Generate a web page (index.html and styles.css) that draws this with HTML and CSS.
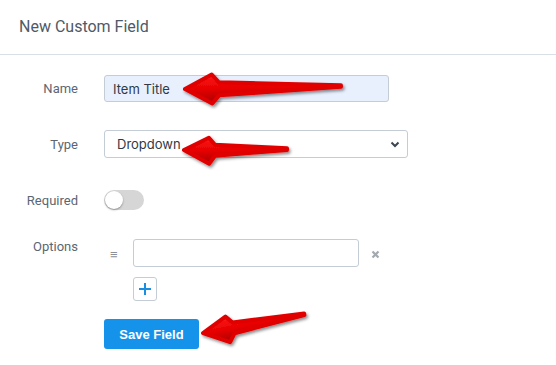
FILE: index.html
```html
<!DOCTYPE html>
<html>
<head>
<meta charset="utf-8">
<link rel="stylesheet" href="styles.css">
</head>
<body>
<div class="page">
  <div class="header">New Custom Field</div>
  <form class="form">
    <div class="row row-name">
      <label class="label">Name</label>
      <input class="input input-name" type="text" value="Item Title">
    </div>
    <div class="row row-type">
      <label class="label">Type</label>
      <div class="select">
        <span>Dropdown</span>
        <svg class="chev" width="10" height="7" viewBox="0 0 10 7"><path d="M1.5 1.5 L5 5 L8.5 1.5" fill="none" stroke="#3c4651" stroke-width="2"/></svg>
      </div>
    </div>
    <div class="row row-req">
      <label class="label">Required</label>
      <div class="toggle"><span class="knob"></span></div>
    </div>
    <div class="row row-opt">
      <label class="label label-top">Options</label>
      <div class="options">
        <div class="opt-line">
          <span class="handle">≡</span>
          <input class="input input-opt" type="text" value="">
          <svg class="remove" width="9" height="9" viewBox="0 0 9 9"><path d="M1.5 1.5 L7.5 7.5 M7.5 1.5 L1.5 7.5" stroke="#a3a9b0" stroke-width="2.2"/></svg>
        </div>
        <div class="add"><svg width="14" height="14" viewBox="0 0 14 14"><path d="M7 1 V13 M1 7 H13" stroke="#1b8ee0" stroke-width="2"/></svg></div>
      </div>
    </div>
    <div class="row row-save">
      <span class="label"></span>
      <button type="button" class="btn">Save Field</button>
    </div>
  </form>
  <svg class="arrows" width="556" height="365" viewBox="0 0 556 365">
    <defs>
      <linearGradient id="rg" x1="0" y1="0" x2="0" y2="1">
        <stop offset="0" stop-color="#ff1a1a"/>
        <stop offset="0.5" stop-color="#e60000"/>
        <stop offset="1" stop-color="#a80000"/>
      </linearGradient>
      <filter id="sh" x="-20%" y="-50%" width="140%" height="200%">
        <feDropShadow dx="1.5" dy="2" stdDeviation="1.5" flood-color="#000" flood-opacity="0.45"/>
      </filter>
    </defs>
    <g filter="url(#sh)">
      <path transform="translate(185 89) rotate(-1.1)" d="M0 0 L27 -14 L34 -6 L156 -0.8 L156 0.8 L34 7 L27 15 Z" fill="url(#rg)" stroke="#e00000" stroke-width="4" stroke-linejoin="round"/>
    </g>
    <g filter="url(#sh)">
      <path transform="translate(184 150) rotate(-0.5)" d="M0 0 L25 -12 L31 -5 L103 -0.8 L103 0.8 L31 6 L25 14 Z" fill="url(#rg)" stroke="#e00000" stroke-width="4" stroke-linejoin="round"/>
    </g>
    <g filter="url(#sh)">
      <path transform="translate(203 333) rotate(-10.5)" d="M0 0 L25 -12 L31 -5 L103 -0.8 L103 0.8 L31 6 L25 14 Z" fill="url(#rg)" stroke="#e00000" stroke-width="4" stroke-linejoin="round"/>
    </g>
  </svg>
</div>
</body>
</html>
```

FILE: styles.css
```css
* { box-sizing: border-box; }
html, body { margin: 0; padding: 0; background: #fff; }
body { width: 556px; height: 365px; overflow: hidden; font-family: Roboto, "Liberation Sans", sans-serif; }
.page { position: relative; width: 556px; height: 365px; }
.header {
  height: 55px;
  padding: 17px 0 0 19px;
  font-size: 16px;
  color: #4e5a67;
  border-bottom: 1px solid #d8dfe6;
}
.form { display: flex; flex-direction: column; padding-top: 20px; }
.row { display: flex; align-items: center; }
.label {
  width: 78px;
  margin-right: 26px;
  text-align: right;
  font-size: 13px;
  color: #5b6673;
  flex: none;
}
.input {
  height: 27px;
  border: 1px solid #c4ccd5;
  border-radius: 3px;
  font-family: Inter, "Noto Sans", sans-serif;
  font-size: 13px;
  color: #2f3a45;
  padding: 0 8px;
  outline: none;
  background: #fff;
}
.input-name { width: 285px; background: #e8f0fe; }
.row-name { margin-bottom: 28px; }
.select {
  width: 304px;
  height: 28px;
  border: 1px solid #c4ccd5;
  border-radius: 3px;
  display: flex;
  align-items: center;
  justify-content: space-between;
  padding: 0 7px 0 12px;
  font-family: Inter, "Noto Sans", sans-serif;
  font-size: 13px;
  color: #2f3a45;
}
.row-type { margin-bottom: 32px; }
.toggle {
  width: 40px;
  height: 20px;
  border-radius: 10px;
  background: #d6d6d6;
  position: relative;
}
.knob {
  position: absolute;
  left: 1px;
  top: 1px;
  width: 18px;
  height: 18px;
  border-radius: 50%;
  background: #fff;
  box-shadow: 0 1px 2px rgba(0,0,0,0.35);
}
.row-req { margin-bottom: 29px; }
.row-opt { align-items: flex-start; margin-bottom: 18px; }
.label-top { line-height: 15px; }
.options { display: flex; flex-direction: column; }
.opt-line { display: flex; align-items: center; height: 28px; }
.handle {
  width: 29px;
  padding-left: 6px;
  font-size: 13px;
  line-height: 13px;
  color: #8a9199;
  padding-top: 3px;
}
.input-opt { width: 226px; height: 28px; }
.remove { margin-left: 12px; margin-top: 2px; }
.add {
  margin: 10px 0 0 29px;
  width: 24px;
  height: 24px;
  border: 1px solid #c4ccd5;
  border-radius: 3px;
  display: flex;
  align-items: center;
  justify-content: center;
}
.btn {
  width: 95px;
  height: 30px;
  border: none;
  border-radius: 3px;
  background: #1593ea;
  color: #fff;
  font-family: "Liberation Sans", Arial, sans-serif;
  font-weight: bold;
  font-size: 13px;
  padding: 0;
}
.arrows { position: absolute; left: 0; top: 0; pointer-events: none; }
```
